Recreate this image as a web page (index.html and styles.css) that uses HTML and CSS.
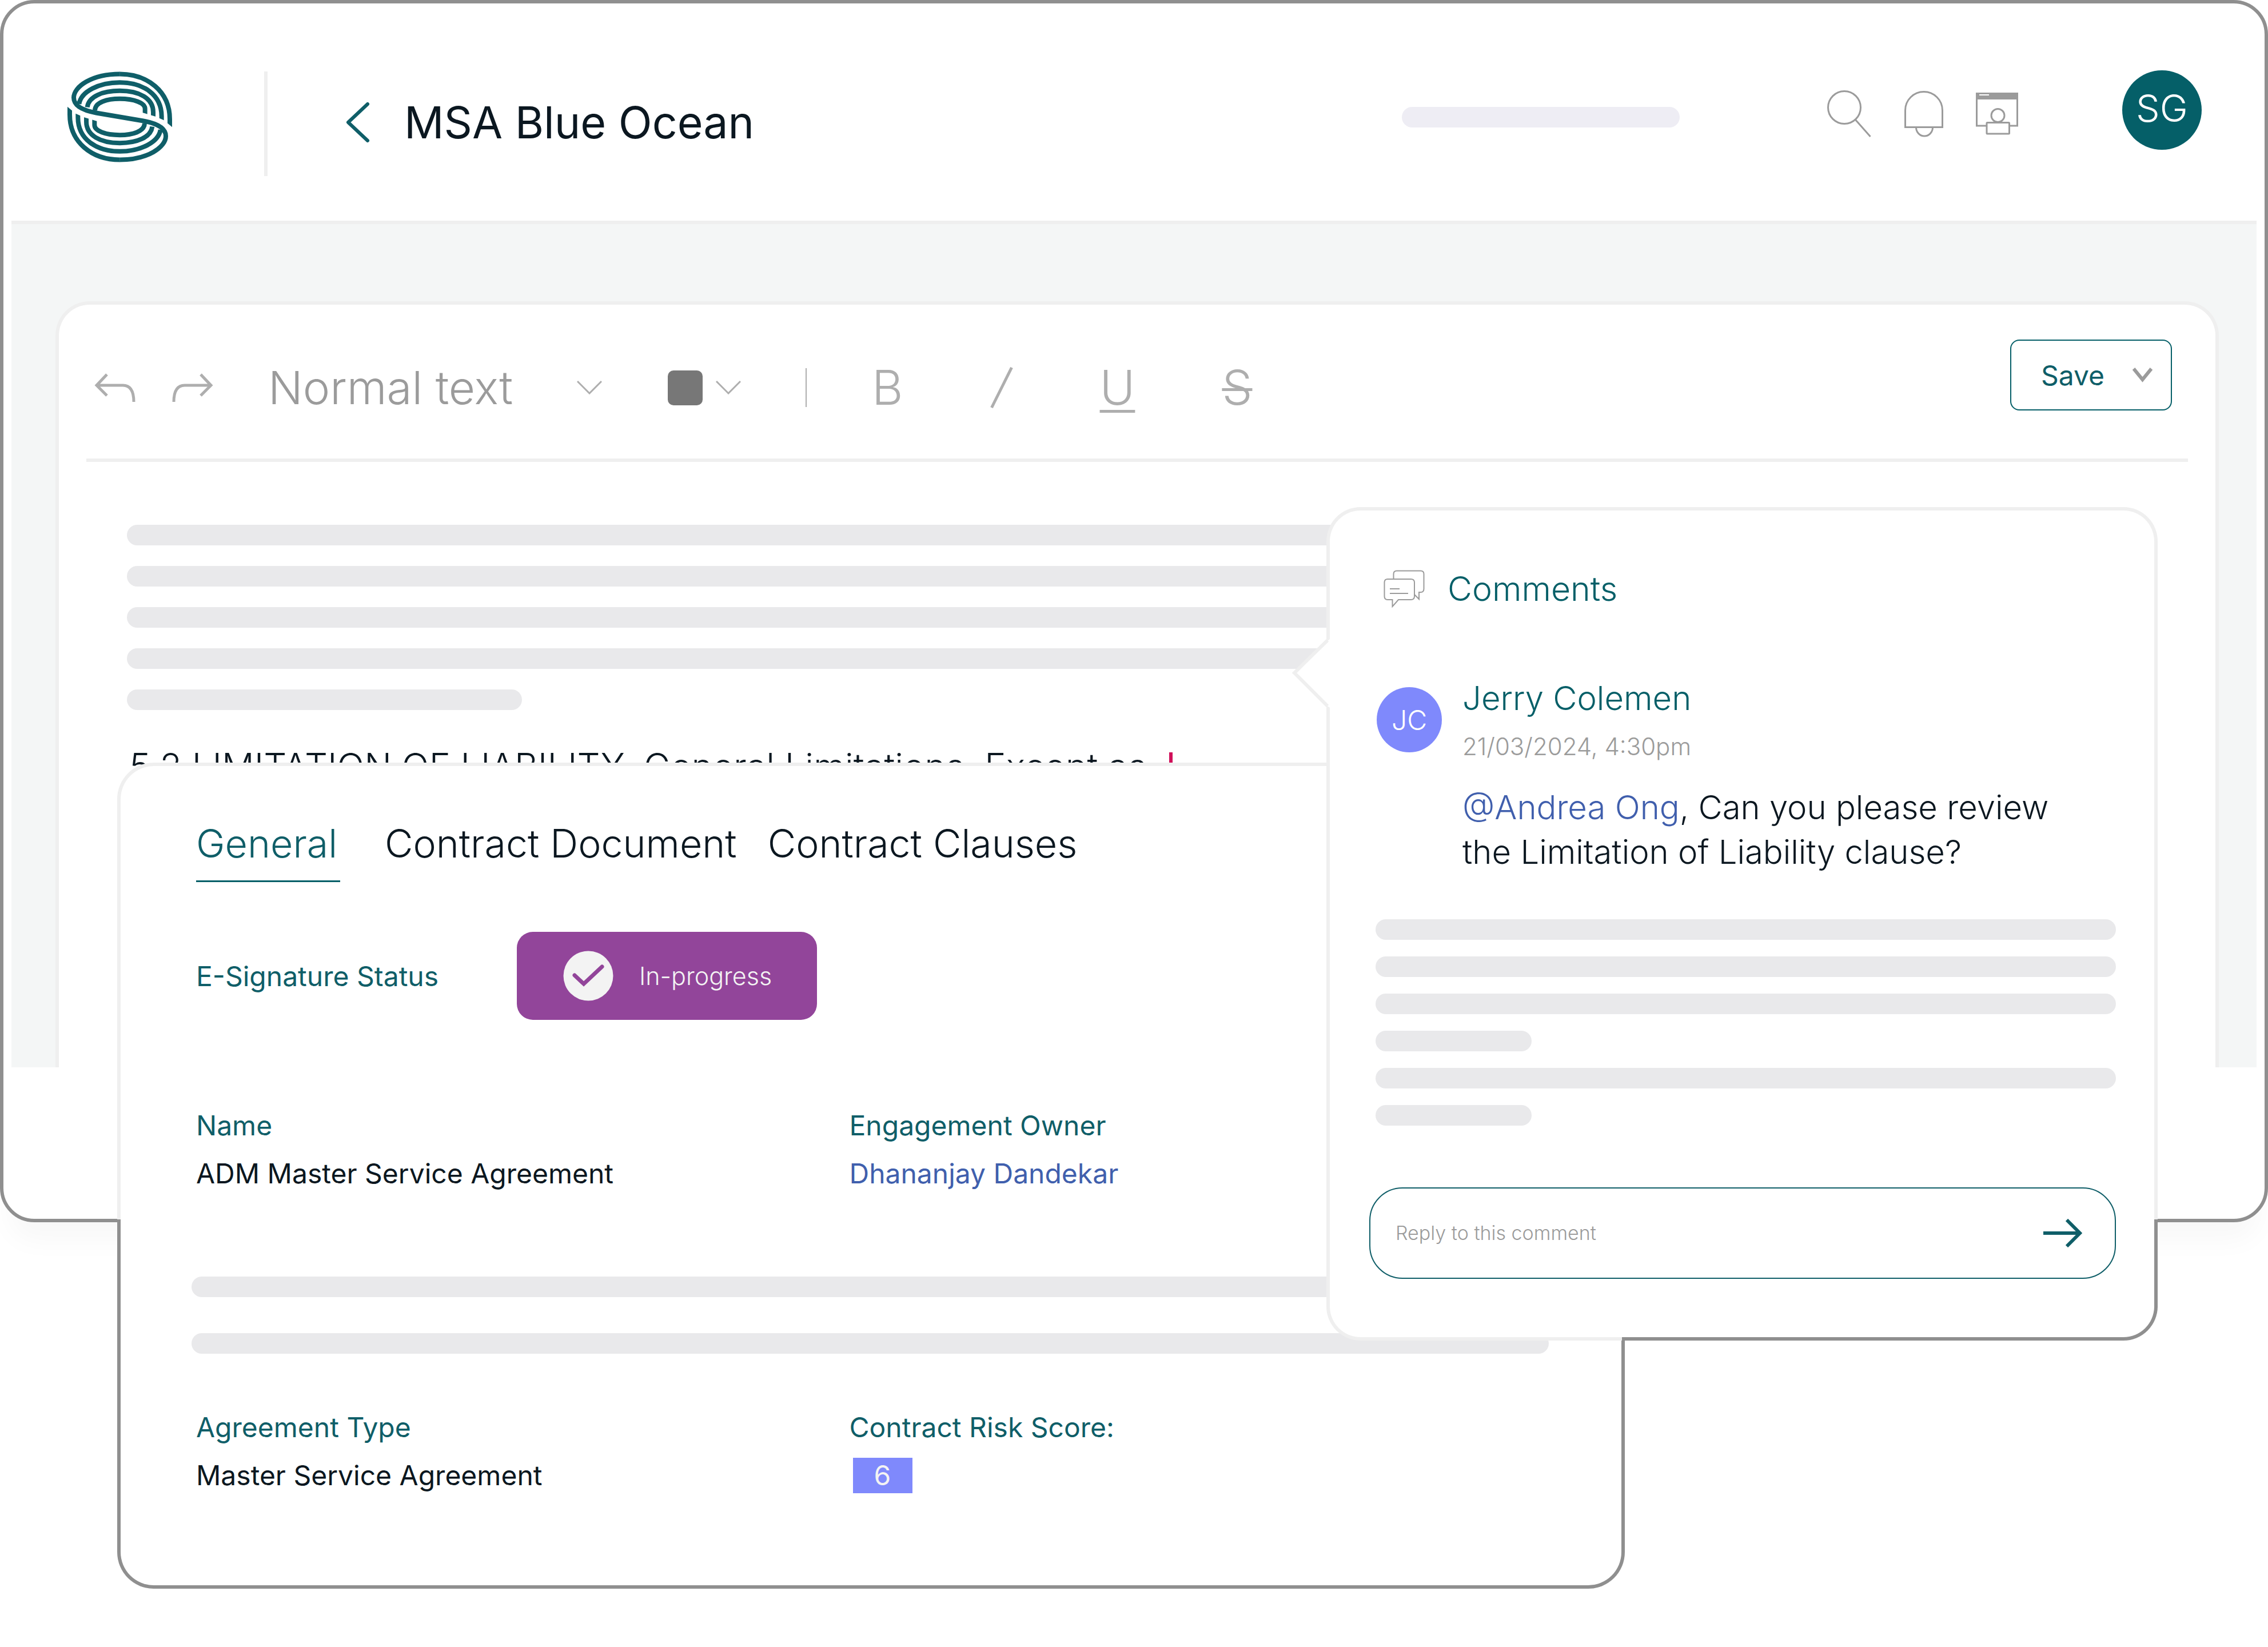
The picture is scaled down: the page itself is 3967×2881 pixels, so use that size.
FILE: index.html
```html
<!DOCTYPE html>
<html lang="en">
<head>
<meta charset="utf-8">
<meta name="viewport" content="width=device-width, initial-scale=1">
<title>MSA Blue Ocean</title>
<link rel="stylesheet" href="styles.css">
</head>
<body>
<div class="stage">
  <main class="window">
    <header class="topbar">
      <div class="topbar-left">
        <a class="logo" href="#" aria-label="Home">
          <svg width="183" height="159" viewBox="54 75 549 476" fill="none" stroke="#0f5e68" stroke-width="24">
            <defs>
              <clipPath id="cut"><path d="M0 0H660V416L603 366L560 330L515 311L450 291L328 300H0Z"/></clipPath>
              <g id="rings" clip-path="url(#cut)">
                <path d="M591 390V325C591 180 475 88 328 88"/>
                <path d="M548 350V310C548 195 450 132 328 132C220 132 125 180 115 245"/>
                <path d="M504 340V288C504 215 430 176 328 176C240 176 165 205 158 262"/>
                <path d="M461 320V270C461 240 405 218 328 218C265 218 198 235 198 280"/>
              </g>
            </defs>
            <use href="#rings"/>
            <use href="#rings" transform="rotate(180 328.5 313)"/>
            <path d="M329 88C180 88 87 155 87 212C87 262 150 282 205 292L452 334C507 344 570 364 570 414C570 471 477 538 328 538"/>
          </svg>
        </a>
        <span class="topbar-rule"></span>
        <div class="title-group">
          <a class="back" href="#" aria-label="Back">
            <svg width="42" height="72" viewBox="0 0 42 72" fill="none" stroke="#0f5e68" stroke-width="6" stroke-linecap="round" stroke-linejoin="round"><path d="M38 4L4 36L38 68"/></svg>
          </a>
          <h1 class="title">MSA Blue Ocean</h1>
        </div>
      </div>
      <div class="topbar-right">
        <span class="crumb"></span>
        <div class="actions">
          <button class="icon-button" aria-label="Search">
            <svg width="78" height="82" viewBox="0 0 78 82" fill="none" stroke="#9b9b9b" stroke-width="3"><circle cx="30" cy="30" r="28.5"/><path d="M49 51L75.500 81"/></svg>
          </button>
          <button class="icon-button" aria-label="Notifications">
            <svg width="68" height="81" viewBox="0 0 68 81" fill="none" stroke="#9b9b9b" stroke-width="3"><path d="M1.500 63.500V34a32.500 32.500 0 0 1 65 0V63.500Z"/><path d="M20.500 64a14.500 15 0 0 0 29 0"/></svg>
          </button>
          <button class="icon-button" aria-label="Portal">
            <svg width="74" height="74" viewBox="0 0 74 74" fill="none" stroke="#9b9b9b" stroke-width="3"><path d="M1.500 1.500H72.500V58H1.500Z"/><path d="M0 0H74V12H0Z" fill="#9b9b9b" stroke="none"/><path d="M6 4H23" stroke="#fff" stroke-width="2"/><circle cx="38.500" cy="40" r="11.500"/><rect x="19" y="52.500" width="39.500" height="19.500" rx="1" fill="#fff"/></svg>
          </button>
        </div>
        <span class="avatar avatar-user">SG</span>
      </div>
    </header>

    <section class="workspace">
      <article class="editor">
        <div class="toolbar">
          <div class="tools">
            <button class="icon-button" aria-label="Undo">
              <svg width="72" height="50" viewBox="0 0 72 50" fill="none" stroke="#aeaeae" stroke-width="5"><path d="M22 2L4 21L22 39M4 21H50Q69 21 69 50"/></svg>
            </button>
            <button class="icon-button redo" aria-label="Redo">
              <svg width="72" height="50" viewBox="0 0 72 50" fill="none" stroke="#aeaeae" stroke-width="5"><path d="M50 2L68 21L50 39M68 21H22Q3 21 3 50"/></svg>
            </button>
            <div class="style-picker">
              <select class="style-select" aria-label="Text style"><option>Normal text</option></select>
              <svg class="caret" width="44" height="24" viewBox="0 0 44 24" fill="none" stroke="#aeaeae" stroke-width="3"><path d="M1 1L22 22L43 1"/></svg>
            </div>
            <button class="colour" aria-label="Text colour">
              <span class="swatch"></span>
              <svg class="caret" width="44" height="24" viewBox="0 0 44 24" fill="none" stroke="#aeaeae" stroke-width="3"><path d="M1 1L22 22L43 1"/></svg>
            </button>
            <span class="tool-rule"></span>
            <div class="formats">
              <button class="format" aria-label="Bold">B</button>
              <button class="format" aria-label="Italic"><svg width="40" height="72" viewBox="0 0 40 72" stroke="#aeaeae" stroke-width="5"><path d="M2.500 71L37.500 1"/></svg></button>
              <button class="format underline" aria-label="Underline">U</button>
              <button class="format strike" aria-label="Strikethrough">S</button>
            </div>
          </div>
          <button class="save">Save
            <svg width="35" height="26" viewBox="0 0 35 26" fill="none" stroke="#9b9b9b" stroke-width="6"><path d="M2 2L17.500 21L33 2"/></svg>
          </button>
        </div>
        <div class="document">
          <div class="lines">
            <span class="line"></span><span class="line"></span><span class="line"></span><span class="line"></span><span class="line line-short"></span>
          </div>
          <p class="clause">5.2 LIMITATION OF LIABILITY. General Limitations. Except as<span class="cursor"></span></p>
        </div>
      </article>
    </section>
  </main>

  <section class="details">
    <nav class="tabs">
      <button class="tab tab-active">General</button>
      <button class="tab">Contract Document</button>
      <button class="tab">Contract Clauses</button>
    </nav>
    <div class="status">
      <span class="status-label">E-Signature Status</span>
      <span class="status-badge">
        <svg width="88" height="88" viewBox="0 0 88 88"><circle cx="44" cy="44" r="43.500" fill="#f3f3f3"/><path d="M20 43L36 58L68 28" fill="none" stroke="#92459a" stroke-width="7" stroke-linecap="round"/></svg>
        In-progress
      </span>
    </div>
    <dl class="fields">
      <div><dt>Name</dt><dd>ADM Master Service Agreement</dd></div>
      <div><dt>Engagement Owner</dt><dd><a href="#">Dhananjay Dandekar</a></dd></div>
    </dl>
    <div class="detail-lines"><span class="line"></span><span class="line"></span></div>
    <dl class="fields">
      <div><dt>Agreement Type</dt><dd>Master Service Agreement</dd></div>
      <div><dt>Contract Risk Score:</dt><dd><span class="score">6</span></dd></div>
    </dl>
  </section>

  <aside class="comments">
    <svg class="pointer" width="66" height="120" viewBox="0 0 66 120"><path d="M66 0V120L62 117L3 59L62 3Z" fill="#fff"/><path d="M62 2L4 59L62 117" fill="none" stroke="#efefef" stroke-width="6"/></svg>
    <h2 class="comments-title">
      <svg width="72" height="66" viewBox="0 0 72 66" fill="none" stroke="#9b9b9b" stroke-width="2"><path d="M7 16H48Q54 16 54 22V46Q54 52 48 52H26L15.500 64V52H7Q1.500 52 1.500 46V22Q1.500 16 7 16Z"/><path d="M17.500 16V7Q17.500 1.500 23 1.500H65Q70.500 1.500 70.500 7V33Q70.500 39 65 39H62V51L54 43"/><path d="M11 33H28M11 41H43"/></svg>
      Comments
    </h2>
    <div class="comment">
      <span class="avatar avatar-author">JC</span>
      <div class="comment-body">
        <h3 class="author">Jerry Colemen</h3>
        <time class="date" datetime="2024-03-21T16:30">21/03/2024, 4:30pm</time>
        <p class="message"><a href="#">@Andrea Ong</a>, Can you please review the Limitation of Liability clause?</p>
      </div>
    </div>
    <div class="thread">
      <span class="line"></span><span class="line"></span><span class="line"></span><span class="line line-short"></span><span class="line"></span><span class="line line-short"></span>
    </div>
    <form class="reply">
      <input class="reply-input" type="text" placeholder="Reply to this comment" aria-label="Reply to this comment">
      <button class="icon-button" type="button" aria-label="Send">
        <svg width="68" height="50" viewBox="0 0 68 50" fill="none" stroke="#0f5e68" stroke-width="6"><path d="M0 25H63M41 2L64 25L41 48"/></svg>
      </button>
    </form>
  </aside>
</div>
</body>
</html>
```
FILE: styles.css
```css
:root {
  --teal: #0f5e68;
  --ink: #0b1720;
  --link: #405fad;
  --grey: #9b9b9b;
  --tool: #aeaeae;
  --edge: #efefef;
  --frame: #8f8f8f;
  --violet: #7f89fc;
  --line: #e9e9eb;
}

* {
  box-sizing: border-box;
}

body,
h1,
h2,
h3,
p,
dl,
dd {
  margin: 0;
}

body {
  background: #fff;
  color: var(--ink);
  font-family: Inter, "Liberation Sans", sans-serif;
  font-weight: 400;
}

svg {
  display: block;
  flex: none;
}

a {
  color: var(--link);
  text-decoration: none;
}

button,
select,
input {
  margin: 0;
  padding: 0;
  border: 0;
  background: none;
  color: inherit;
  font: inherit;
}

/* The three surfaces share one grid and overlap each other */
.stage {
  display: grid;
  grid-template-columns: 205fr 2115fr 522fr 932fr 193fr;
  align-items: start;
}

.window {
  grid-area: 1 / 1 / 2 / 6;
  padding-bottom: 265px;
  border: 6px solid var(--frame);
  border-radius: 60px;
  background: #fff;
  box-shadow: 0 48px 48px -16px rgba(0, 0, 0, 0.03);
}

/* Top bar */
.topbar {
  display: flex;
  justify-content: space-between;
  align-items: flex-start;
  height: 380px;
  padding: 117px 110px 0 112px;
}

.topbar-left {
  display: flex;
  align-items: center;
  height: 186px;
}

.logo {
  padding-bottom: 24px;
}

.topbar-rule {
  width: 6px;
  height: 183px;
  margin: 0 137px 0 161px;
  background: var(--edge);
}

.title-group {
  display: flex;
  align-items: center;
  gap: 60px;
  padding-bottom: 4px;
}

.title {
  font-size: 77px;
  font-weight: 400;
  line-height: 96px;
}

.topbar-right {
  display: flex;
  align-items: center;
  height: 152px;
}

.crumb {
  width: 486px;
  height: 36px;
  margin: 12px 258px 0 0;
  border-radius: 18px;
  background: #eeedf4;
}

.actions {
  display: flex;
  align-items: center;
  gap: 57px;
  margin-right: 182px;
}

.avatar {
  display: flex;
  flex: none;
  align-items: center;
  justify-content: center;
  border-radius: 50%;
  color: #fff;
  font-weight: 300;
}

.avatar-user {
  align-self: flex-start;
  width: 139px;
  height: 139px;
  padding-bottom: 8px;
  background: #055f68;
  font-size: 66px;
}

/* Editor */
.workspace {
  margin: 0 14px;
  padding: 135px 66px 0 77px;
  border-top: 6px solid var(--edge);
  background: #f4f6f6;
}

.editor {
  border: 6px solid var(--edge);
  border-bottom: 0;
  border-radius: 60px 60px 0 0;
  background: #fff;
}

.toolbar {
  display: flex;
  justify-content: space-between;
  align-items: flex-end;
  margin: 0 48px;
  padding: 61px 28px 84px 14px;
  border-bottom: 6px solid var(--edge);
}

.tools {
  display: flex;
  align-items: center;
  height: 80px;
}

.redo {
  margin: 0 96px 0 64px;
}

.style-picker {
  display: grid;
  align-items: center;
  width: 584px;
}

.style-select {
  grid-area: 1 / 1;
  width: 100%;
  appearance: none;
  color: var(--grey);
  font-size: 80px;
  font-weight: 300;
  line-height: 80px;
}

.style-picker .caret {
  grid-area: 1 / 1;
  justify-self: end;
  pointer-events: none;
}

.colour {
  display: flex;
  align-items: center;
  gap: 23px;
  margin: 0 113px 0 115px;
}

.swatch {
  width: 61px;
  height: 61px;
  border-radius: 10px;
  background: #777;
}

.tool-rule {
  width: 2px;
  height: 68px;
  background: var(--tool);
}

.formats {
  display: flex;
  align-items: center;
  gap: 152px;
  margin-left: 114px;
}

.format {
  color: var(--tool);
  font-size: 84px;
  font-weight: 300;
  line-height: 80px;
}

.underline {
  text-decoration: underline 5px;
  text-underline-offset: 9px;
}

.strike {
  text-decoration: line-through 5px;
}

.save {
  display: flex;
  align-items: center;
  justify-content: space-between;
  width: 283px;
  height: 124px;
  padding: 0 32px 0 52px;
  border: 2px solid #055f68;
  border-radius: 16px;
  color: var(--teal);
  font-size: 48px;
}

.document {
  padding: 110px 200px 487px 119px;
}

.lines {
  display: flex;
  flex-direction: column;
  gap: 36px;
}

.line {
  height: 36px;
  border-radius: 18px;
  background: var(--line);
}

.lines .line-short {
  width: 691px;
}

.clause {
  display: flex;
  align-items: center;
  margin-top: 58px;
  padding-left: 4px;
  font-size: 63px;
  font-weight: 300;
  line-height: 80px;
  white-space: nowrap;
}

.cursor {
  width: 6px;
  height: 48px;
  margin-left: 40px;
  background: #d0105a;
}

/* Contract details; the edge darkens where the panel leaves the window */
.details {
  grid-area: 1 / 2 / 2 / 4;
  margin-top: 1334px;
  padding: 95px 127px 150px 124px;
  border: 6px solid transparent;
  border-radius: 64px;
  background:
    linear-gradient(#fff, #fff) padding-box,
    linear-gradient(var(--edge) 799px, var(--frame) 799px) border-box;
}

.tabs {
  display: flex;
  gap: 54px;
  padding: 0 8px;
}

.tab {
  padding-bottom: 25px;
  border-bottom: 3px solid transparent;
  font-size: 68px;
  font-weight: 300;
  line-height: 80px;
}

.tab-active {
  width: 252px;
  margin-right: 24px;
  border-color: #055f68;
  color: var(--teal);
  text-align: left;
}

.status {
  display: flex;
  align-items: center;
  margin-top: 87px;
  padding: 0 8px;
  font-size: 48px;
}

.status-label {
  width: 561px;
  color: var(--teal);
}

.status-badge {
  display: flex;
  align-items: center;
  gap: 45px;
  width: 525px;
  height: 154px;
  padding-left: 81px;
  border-radius: 28px;
  background: #92459a;
  color: #f3f3f3;
  font-size: 43px;
  font-weight: 300;
}

.fields {
  display: grid;
  grid-template-columns: 1143fr 1216fr;
  margin-top: 143px;
  padding: 0 8px;
  font-size: 48px;
  line-height: 84px;
}

.fields dt {
  color: var(--teal);
}

.fields dd {
  display: flex;
  align-items: center;
  height: 84px;
}

.score {
  width: 104px;
  height: 62px;
  margin-left: 6px;
  background: var(--violet);
  color: #f3f3f3;
  line-height: 62px;
  text-align: center;
}

.detail-lines {
  display: flex;
  flex-direction: column;
  gap: 63px;
  margin-top: 138px;
}

.detail-lines + .fields {
  margin-top: 87px;
}

/* Comments */
.comments {
  position: relative;
  grid-area: 1 / 3 / 2 / 5;
  margin-top: 887px;
  padding: 101px 67px 102px 69px;
  border: 6px solid transparent;
  border-radius: 60px;
  background:
    linear-gradient(#fff, #fff) padding-box,
    linear-gradient(var(--edge), var(--edge)) 0 0 / calc(100% - 937px) 100% no-repeat border-box,
    linear-gradient(var(--edge) 1246px, var(--frame) 1246px) border-box;
}

.pointer {
  position: absolute;
  top: 225px;
  left: -66px;
}

.comments-title {
  display: flex;
  align-items: center;
  gap: 40px;
  padding-left: 25px;
  color: #055f68;
  font-size: 59px;
  font-weight: 300;
  line-height: 72px;
}

.comment {
  display: flex;
  gap: 36px;
  margin-top: 116px;
  padding-left: 13px;
}

.avatar-author {
  width: 114px;
  height: 114px;
  margin-top: 20px;
  background: var(--violet);
  font-size: 48px;
}

.comment-body {
  flex: 1;
  padding-right: 80px;
  font-size: 58px;
  font-weight: 300;
  line-height: 78px;
}

.author {
  color: #055f68;
  font: inherit;
}

.date {
  display: block;
  margin: 16px 0 37px;
  color: var(--grey);
  font-size: 42px;
  line-height: 60px;
}

.thread {
  display: flex;
  flex-direction: column;
  gap: 29px;
  margin-top: 79px;
  padding-left: 11px;
}

.thread .line-short {
  width: 273px;
}

.reply {
  display: flex;
  align-items: center;
  height: 160px;
  margin-top: 108px;
  padding: 0 57px 0 44px;
  border: 2px solid var(--teal);
  border-radius: 58px;
}

.reply-input {
  flex: 1;
  font-size: 34px;
  font-weight: 300;
  line-height: 48px;
  outline: 0;
}

.reply-input::placeholder {
  color: var(--grey);
  opacity: 1;
}
```
